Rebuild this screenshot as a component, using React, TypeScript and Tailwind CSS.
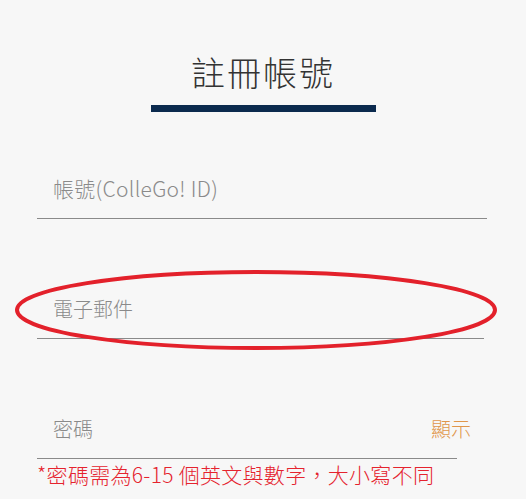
import React from "react";

export default function App() {
  return (
    <div
      className="relative w-[526px] h-[499px] overflow-hidden bg-[#f7f7f7]"
      style={{ fontFamily: '"Noto Sans CJK TC", "Noto Sans", sans-serif' }}
    >
      <div className="flex flex-col items-center pt-[50px]">
        <h1 className="h-[44px] leading-[44px] text-[34px] tracking-[2px] text-[#333333] font-light">
          註冊帳號
        </h1>
        <div className="mt-[11px] h-[7px] w-[225px] bg-[#0b2a4e]" />
      </div>

      <div className="pl-[37px] mt-[48px] flex flex-col">
        <div className="w-[450px] h-[59px] border-b border-[#8a8a8a] flex items-center pl-4">
          <span className="text-[21px] font-light text-[#8a8a8a] tracking-[0.3px]">帳號(ColleGo! ID)</span>
        </div>
        <div className="mt-[61px] w-[447px] h-[59px] border-b border-[#8a8a8a] flex items-center pl-4">
          <span className="text-[20px] font-light text-[#8a8a8a]">電子郵件</span>
        </div>
        <div className="mt-[61px] w-[420px] h-[59px] border-b border-[#8a8a8a] flex items-center justify-between pl-4">
          <span className="text-[20px] font-light text-[#8a8a8a]">密碼</span>
          <span className="text-[20px] font-light text-[#e0964b] -mr-[14px]">顯示</span>
        </div>
        <div className="mt-[3px] text-[21px] leading-[24px] font-light text-[#e5232e] whitespace-nowrap tracking-[0.3px]">
          *密碼需為6-15 個英文與數字，大小寫不同
        </div>
      </div>

      <svg className="absolute left-0 top-0 pointer-events-none" width="526" height="499">
        <ellipse cx="256" cy="310" rx="239" ry="38" fill="none" stroke="#e3212b" strokeWidth="4" />
      </svg>
    </div>
  );
}
